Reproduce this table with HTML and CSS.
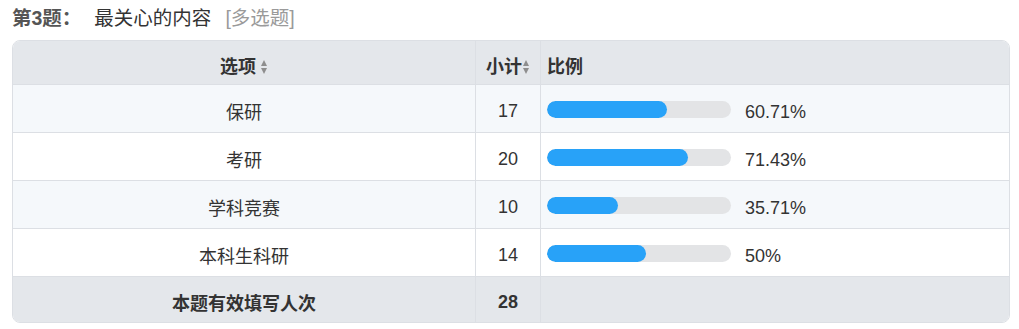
FILE: index.html
```html
<!DOCTYPE html>
<html lang="zh-CN">
<head>
<meta charset="utf-8">
<title>第3题</title>
<link rel="stylesheet" href="styles.css">
</head>
<body>
<div class="page">
  <div class="title">
    <span class="qno">第3题：</span>
    <span class="qtext">最关心的内容</span>
    <span class="qtype">[多选题]</span>
  </div>
  <div class="card">
    <table class="stats">
      <colgroup>
        <col class="c1">
        <col class="c2">
        <col class="c3">
      </colgroup>
      <thead>
        <tr>
          <th class="center">选项<span class="sort sp"><i class="up"></i><i class="down"></i></span></th>
          <th class="center">小计<span class="sort"><i class="up"></i><i class="down"></i></span></th>
          <th class="left">比例</th>
        </tr>
      </thead>
      <tbody>
        <tr class="odd">
          <td class="center">保研</td>
          <td class="center">17</td>
          <td><div class="ratio"><div class="track"><div class="fill" style="width:120px"></div></div><span class="pct">60.71%</span></div></td>
        </tr>
        <tr>
          <td class="center">考研</td>
          <td class="center">20</td>
          <td><div class="ratio"><div class="track"><div class="fill" style="width:141px"></div></div><span class="pct">71.43%</span></div></td>
        </tr>
        <tr class="odd">
          <td class="center">学科竞赛</td>
          <td class="center">10</td>
          <td><div class="ratio"><div class="track"><div class="fill" style="width:71px"></div></div><span class="pct">35.71%</span></div></td>
        </tr>
        <tr>
          <td class="center">本科生科研</td>
          <td class="center">14</td>
          <td><div class="ratio"><div class="track"><div class="fill" style="width:99px"></div></div><span class="pct">50%</span></div></td>
        </tr>
      </tbody>
      <tfoot>
        <tr>
          <td class="center bold">本题有效填写人次</td>
          <td class="center bold">28</td>
          <td></td>
        </tr>
      </tfoot>
    </table>
  </div>
</div>
</body>
</html>
```

FILE: styles.css
```css
html, body {
  margin: 0;
  padding: 0;
  background: #ffffff;
}

body {
  font-family: "Liberation Sans", "Noto Sans CJK SC", sans-serif;
  font-size: 18px;
  color: #333333;
}

.page {
  padding: 6px 9px 0 12px;
}

.title {
  display: flex;
  align-items: center;
  height: 24px;
  line-height: 24px;
  margin-bottom: 10px;
  font-size: 19.5px;
}

.qno {
  font-weight: bold;
  color: #555555;
}

.qtext {
  margin-left: 13px;
  color: #333333;
}

.qtype {
  margin-left: 14px;
  color: #9a9a9a;
}

.card {
  width: 998px;
  box-sizing: border-box;
  border: 1px solid #dcdfe4;
  border-radius: 8px;
  overflow: hidden;
}

.stats {
  width: 100%;
  border-collapse: separate;
  border-spacing: 0;
  table-layout: fixed;
}

.c1 { width: 463px; }
.c2 { width: 65px; }

.stats th,
.stats td {
  padding: 5px 6px 0 6px;
  vertical-align: middle;
  border-right: 1px solid #dcdfe4;
  border-bottom: 1px solid #dcdfe4;
  white-space: nowrap;
}

.stats th:last-child,
.stats td:last-child {
  border-right: none;
}

.stats tfoot td {
  border-bottom: none;
}

.stats thead tr { height: 44px; }
.stats tbody tr { height: 48px; }
.stats tfoot tr { height: 45px; }

.stats thead th {
  background: #e4e7eb;
  font-weight: bold;
  color: #333333;
}

.stats tfoot td {
  background: #e4e7eb;
}

.stats tbody tr { background: #ffffff; }
.stats tbody tr.odd { background: #f5f8fb; }

.center { text-align: center; }
.left { text-align: left; }
.bold { font-weight: bold; }

.stats td.center,
.stats th.center {
  padding-left: 0;
  padding-right: 0;
}

.sort {
  display: inline-block;
  width: 7px;
  height: 14px;
  margin-left: 1px;
  vertical-align: -1px;
}

.sort.sp {
  margin-left: 5px;
}

.sort i {
  display: block;
  width: 0;
  height: 0;
  border-left: 3.5px solid transparent;
  border-right: 3.5px solid transparent;
}

.sort .up {
  border-bottom: 6px solid #8e8e8e;
  margin-bottom: 2px;
}

.sort .down {
  border-top: 6px solid #8e8e8e;
}

.ratio {
  display: flex;
  align-items: center;
}

.track {
  width: 184px;
  height: 17px;
  border-radius: 9px;
  background: #e3e4e6;
  overflow: hidden;
  margin-top: -3px;
}

.fill {
  height: 100%;
  background: #28a2f8;
  border-radius: 9px;
}

.pct {
  margin-left: 14px;
  position: relative;
  top: 1px;
  color: #333333;
}
```
